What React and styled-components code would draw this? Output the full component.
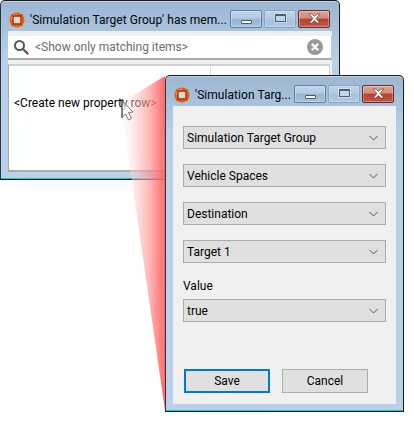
import React from 'react';
import styled, { createGlobalStyle } from 'styled-components';

const GlobalStyle = createGlobalStyle`
  html, body { margin: 0; padding: 0; background: #fff; }
  body { font-family: Roboto, "Open Sans", "Liberation Sans", sans-serif; font-size: 12px; color: #000; }
`;

const Desktop = styled.div`
  position: relative;
  width: 414px;
  height: 422px;
  overflow: hidden;
  background: #fff;
`;

const Window = styled.div`
  position: absolute;
  left: ${(p) => p.$left}px;
  top: ${(p) => p.$top}px;
  width: ${(p) => p.$width}px;
  height: ${(p) => p.$height}px;
  box-sizing: border-box;
  display: flex;
  flex-direction: column;
  border: 1px solid #1a1a1a;
  border-left-color: #30343a;
  border-radius: 5px 5px 0 0;
  padding: 0 7px 7px;
  background: linear-gradient(180deg, #9db6d2 0, #aac3df 30px, #b9d1ea 60px, #b9d1ea 100%);
  box-shadow: inset 0 -1px 0 #1cc4e6, inset 0 1px 0 #c4d4e6;
`;

const TitleBar = styled.div`
  height: 30px;
  flex: none;
  display: flex;
  align-items: flex-start;
`;

const AppIcon = styled.svg`
  width: 16px;
  height: 16px;
  flex: none;
  margin: 11px 5px 0 1px;
`;

const TitleText = styled.div`
  flex: 1;
  min-width: 0;
  margin-top: 10px;
  font-size: 12px;
  line-height: 18px;
  letter-spacing: 0.05px;
  white-space: nowrap;
`;

const CaptionButtons = styled.div`
  display: flex;
  gap: 2px;
  flex: none;
  margin: 9px 2px 0 0;
`;

const CaptionButton = styled.div`
  box-sizing: border-box;
  width: 32px;
  height: 18px;
  display: flex;
  align-items: center;
  justify-content: center;
  border-radius: 2px;
  border: 1px solid ${(p) => (p.$kind === 'close' ? '#6b2a2a' : p.$kind === 'min' ? '#5a7ea5' : '#86a3c3')};
  background: ${(p) =>
    p.$kind === 'close'
      ? 'linear-gradient(180deg, #dfa394 0, #d08b7c 45%, #b8402f 50%, #c15a48 100%)'
      : p.$kind === 'min'
        ? 'linear-gradient(180deg, #c1d4e8 0, #b5cbe2 45%, #98b5d3 50%, #a6c1dc 100%)'
        : 'linear-gradient(180deg, #bdd1e6 0, #b4cbe3 45%, #a8c2de 50%, #aec8e2 100%)'};
  box-shadow: inset 0 0 0 1px rgba(255, 255, 255, 0.3);
`;

const MinGlyph = styled.span`
  display: block;
  width: 11px;
  height: 4px;
  margin-top: 5px;
  box-sizing: border-box;
  border: 1px solid #4d5a68;
  background: #fff;
  border-radius: 1px;
`;

const RestoreGlyph = styled.span`
  display: block;
  width: 11px;
  height: 8px;
  margin-top: -3px;
  box-sizing: border-box;
  border: 1px solid #4d5a68;
  border-top-width: 2px;
  background: #c3d6ea;
  outline: 1px solid rgba(255, 255, 255, 0.4);
`;

const CloseGlyph = styled.svg`
  width: 13px;
  height: 11px;
  margin-top: -1px;
`;

const Client = styled.div`
  flex: 1;
  min-height: 0;
  display: flex;
  flex-direction: column;
  background: #f0f0f0;
`;

const SearchRow = styled.div`
  margin-top: 5px;
  height: 24px;
  flex: none;
  box-sizing: border-box;
  display: flex;
  align-items: center;
  background: #fff;
  border-bottom: 2px solid #ababab;
  border-right: 1px solid #c8c8c8;
  padding: 0 8px 0 5px;
  color: #6d6d6d;
`;

const SearchHint = styled.span`
  flex: 1;
  margin-left: 6px;
  font-size: 12px;
`;

const ListFrame = styled.div`
  flex: 1;
  min-height: 0;
  margin: 4px 2px 0 0;
  box-sizing: border-box;
  position: relative;
  background: #fff;
  border: 1px solid #ababab;
  border-width: 2px 1px 2px 1px;
  border-top-color: #d0d0d0;
  border-right-color: #d0d0d0;
`;

const ListHead = styled.div`
  height: 11px;
  margin-left: 201px;
  border-left: 1px solid #dcdcdc;
`;

const NewRowLabel = styled.div`
  margin: 17px 0 0 5px;
  font-size: 12px;
  line-height: 18px;
  white-space: nowrap;
`;

const Wedge = styled.svg`
  position: absolute;
  left: 0;
  top: 0;
  width: 414px;
  height: 422px;
  pointer-events: none;
`;

const Form = styled.div`
  flex: 1;
  display: flex;
  flex-direction: column;
  padding: 20px 10px 11px;
`;

const Combo = styled.div`
  box-sizing: border-box;
  height: 23px;
  flex: none;
  margin-bottom: ${(p) => (p.$last ? 0 : 15)}px;
  display: flex;
  align-items: center;
  justify-content: space-between;
  padding: 0 7px 0 3px;
  background: #e0e0e0;
  border: 1px solid #ababab;
  font-size: 12px;
`;

const FieldLabel = styled.div`
  height: 22px;
  margin-top: -1px;
  font-size: 12px;
  line-height: 18px;
`;

const ButtonRow = styled.div`
  margin-top: auto;
  display: flex;
  gap: 12px;
  padding-left: 1px;
`;

const DialogButton = styled.div`
  box-sizing: border-box;
  width: 86px;
  height: 24px;
  display: flex;
  align-items: center;
  justify-content: center;
  background: #e0e0e0;
  border: ${(p) => (p.$primary ? '2px solid #0078d7' : '1px solid #adadad')};
  font-size: 12px;
`;

const Chevron = () => (
  <svg width="9" height="6" viewBox="0 0 9 6">
    <path d="M0.5 1 L4.5 5 L8.5 1" fill="none" stroke="#5a5a5a" strokeWidth="1" />
  </svg>
);

const SimIcon = () => (
  <AppIcon viewBox="0 0 16 16">
    <circle cx="8" cy="8" r="7.5" fill="#e8600f" />
    <path d="M2.5 8 A5.5 5.5 0 0 1 8 2.5" fill="none" stroke="#f8a25a" strokeWidth="1.2" />
    <rect x="4" y="4" width="8" height="8" rx="1.5" fill="#dcd8d4" stroke="#a92c08" strokeWidth="1.3" />
    <path d="M2.5 2.5 L5 5 M13.5 2.5 L11 5 M2.5 13.5 L5 11 M13.5 13.5 L11 11" stroke="#a92c08" strokeWidth="1" />
  </AppIcon>
);

const Caption = () => (
  <CaptionButtons>
    <CaptionButton $kind="min"><MinGlyph /></CaptionButton>
    <CaptionButton $kind="restore"><RestoreGlyph /></CaptionButton>
    <CaptionButton $kind="close">
      <CloseGlyph viewBox="0 0 13 11">
        <path d="M1 1 H4 L6.5 3.6 L9 1 H12 L8 5.5 L12 10 H9 L6.5 7.4 L4 10 H1 L5 5.5 Z" fill="#fff" stroke="#6b3a34" strokeWidth="0.7" />
      </CloseGlyph>
    </CaptionButton>
  </CaptionButtons>
);

const SearchIcon = () => (
  <svg width="16" height="16" viewBox="0 0 16 16" style={{ flex: 'none' }}>
    <circle cx="6.5" cy="6.5" r="4.5" fill="none" stroke="#555" strokeWidth="2" />
    <path d="M10 10 L14.5 14.5" stroke="#555" strokeWidth="2.4" strokeLinecap="round" />
  </svg>
);

const ClearIcon = () => (
  <svg width="16" height="16" viewBox="0 0 16 16" style={{ flex: 'none' }}>
    <circle cx="8" cy="8" r="8" fill="#9a9a9a" />
    <path d="M4.8 4.8 L11.2 11.2 M11.2 4.8 L4.8 11.2" stroke="#fff" strokeWidth="2.2" />
  </svg>
);

const combos = ['Simulation Target Group', 'Vehicle Spaces', 'Destination', 'Target 1'];

export default function App() {
  return (
    <Desktop>
      <GlobalStyle />

      <Window $left={0} $top={0} $width={340} $height={180}>
        <TitleBar>
          <SimIcon />
          <TitleText>'Simulation Target Group' has mem...</TitleText>
          <Caption />
        </TitleBar>
        <Client>
          <SearchRow>
            <SearchIcon />
            <SearchHint>&lt;Show only matching items&gt;</SearchHint>
            <ClearIcon />
          </SearchRow>
          <ListFrame>
            <ListHead />
            <NewRowLabel>&lt;Create new property row&gt;</NewRowLabel>
          </ListFrame>
        </Client>
      </Window>

      <Wedge viewBox="0 0 414 422">
        <defs>
          <linearGradient id="wedgeFill" x1="121" y1="0" x2="165" y2="0" gradientUnits="userSpaceOnUse">
            <stop offset="0" stopColor="#fff" stopOpacity="0.3" />
            <stop offset="1" stopColor="#ff5c5c" stopOpacity="0.92" />
          </linearGradient>
        </defs>
        <polygon points="165,76 121,103 121,105 165,411" fill="url(#wedgeFill)" />
        {/* mouse pointer */}
        <path d="M122 99 V118" stroke="#000" strokeWidth="1" fill="none" />
        <path d="M122.5 101 L133 112 L128.5 112.5 L131.5 118.5 L128.5 120 L125.5 114 L122.5 117 Z" fill="#fff" fillOpacity="0.55" stroke="#777" strokeWidth="1" />
      </Wedge>

      <Window $left={165} $top={75} $width={239} $height={337}>
        <TitleBar>
          <SimIcon />
          <TitleText>'Simulation Targ...</TitleText>
          <Caption />
        </TitleBar>
        <Client>
          <Form>
            {combos.map((c) => (
              <Combo key={c}>{c}<Chevron /></Combo>
            ))}
            <FieldLabel>Value</FieldLabel>
            <Combo $last>true<Chevron /></Combo>
            <ButtonRow>
              <DialogButton $primary>Save</DialogButton>
              <DialogButton>Cancel</DialogButton>
            </ButtonRow>
          </Form>
        </Client>
      </Window>
    </Desktop>
  );
}
